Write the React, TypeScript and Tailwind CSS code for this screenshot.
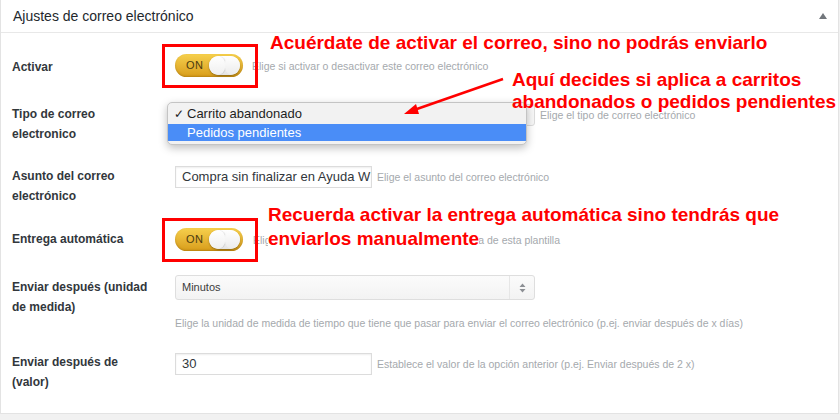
import React from 'react';

const sans = { fontFamily: '"Liberation Sans", Arial, sans-serif' };

function OnToggle() {
  return (
    <div className="relative w-[68px] h-[23px] rounded-full bg-linear-to-b from-[#f6d04c] to-[#d89d18] shadow-[inset_0_-1px_2px_rgba(120,80,0,0.35)] flex items-center shrink-0">
      <span className="ml-[11px] text-[11px] leading-none text-[#4b3b10] tracking-[0.5px]">ON</span>
      <span className="absolute right-[3px] top-[2px] w-[31px] h-[19px] rounded-full bg-linear-to-b from-white to-[#e4e4e4] shadow-[0_1px_2px_rgba(0,0,0,0.35)] flex overflow-hidden">
        <span className="w-1/2 h-full rounded-full bg-linear-to-b from-white to-[#efefef] shadow-[1px_0_1px_rgba(0,0,0,0.12)]" />
        <span className="w-1/2 h-full rounded-full bg-linear-to-b from-white to-[#ebebeb]" />
      </span>
    </div>
  );
}

function RedBox({ children }: { children: React.ReactNode }) {
  return (
    <div className="relative">
      {children}
      <div className="absolute left-[-13px] top-[-10px] w-[96px] h-[44px] border-[3px] border-[#ff0000]" />
    </div>
  );
}

function Label({ children, pt }: { children: React.ReactNode; pt: string }) {
  return (
    <div className={`w-[163px] shrink-0 text-[12px] leading-[20px] font-bold text-[#32373c] ${pt}`}>
      {children}
    </div>
  );
}

function Desc({ children, className = '' }: { children: React.ReactNode; className?: string }) {
  return <span className={`text-[10.5px] leading-[14px] text-[#a5a9ad] whitespace-nowrap ${className}`}>{children}</span>;
}

function TextInput({ value }: { value: string }) {
  return (
    <div className="w-[197px] h-[22px] border border-[#dcdcdc] shadow-[inset_0_1px_2px_rgba(0,0,0,0.07)] bg-white flex items-center px-[6px] overflow-hidden shrink-0">
      <span className="text-[13px] text-[#32373c] whitespace-nowrap">{value}</span>
    </div>
  );
}

export default function App() {
  return (
    <div className="relative w-[840px] h-[420px] bg-[#f1f1f1] overflow-hidden" style={sans}>
      <div className="w-[839px] h-[414px] bg-white border-l border-r border-b border-[#e3e3e3]">
        {/* panel header */}
        <div className="h-[33px] border-b border-[#e8e8e8] flex items-center justify-between pl-[12px] pr-[11px]">
          <span className="text-[14px] text-[#23282d]">Ajustes de correo electrónico</span>
          <svg width="8" height="6" viewBox="0 0 8 6">
            <path d="M0 6 L4 0 L8 6 Z" fill="#72777c" />
          </svg>
        </div>

        {/* Activar */}
        <div className="h-[59px] flex pl-[11px]">
          <Label pt="pt-[24px]">Activar</Label>
          <div className="pt-[21px] flex items-center h-[44px] gap-[9px]">
            <RedBox>
              <OnToggle />
            </RedBox>
            <Desc>Elige si activar o desactivar este correo electrónico</Desc>
          </div>
        </div>

        {/* Tipo de correo */}
        <div className="h-[60px] flex pl-[11px]">
          <Label pt="pt-[12px]">
            Tipo de correo
            <br />
            electronico
          </Label>
          <div className="pt-[12px] flex items-center h-[34px] gap-[5px]">
            <div className="w-[360px] h-[22px] border border-[#dcdcdc] rounded-[3px] bg-[#f7f7f7]" />
            <Desc>Elige el tipo de correo electrónico</Desc>
          </div>
        </div>

        {/* Asunto */}
        <div className="h-[60px] flex pl-[11px]">
          <Label pt="pt-[14px]">
            Asunto del correo
            <br />
            electrónico
          </Label>
          <div className="pt-[14px] flex items-center h-[36px] gap-[5px]">
            <TextInput value="Compra sin finalizar en Ayuda W" />
            <Desc>Elige el asunto del correo electrónico</Desc>
          </div>
        </div>

        {/* Entrega automática */}
        <div className="h-[54px] flex pl-[11px]">
          <Label pt="pt-[17px]">Entrega automática</Label>
          <div className="pt-[16px] flex items-center h-[39px] gap-[10px]">
            <RedBox>
              <OnToggle />
            </RedBox>
            <Desc>Elige si activar o desactivar la entrega automática de esta plantilla</Desc>
          </div>
        </div>

        {/* Enviar después (unidad) */}
        <div className="h-[74px] flex pl-[11px]">
          <Label pt="pt-[11px]">
            Enviar después (unidad
            <br />
            de medida)
          </Label>
          <div className="pt-[9px] flex flex-col">
            <div className="w-[360px] h-[25px] border border-[#dedede] rounded-[3px] bg-linear-to-b from-[#fbfbfb] to-[#f3f3f3] flex items-center">
              <span className="flex-1 pl-[6px] text-[11px] text-[#3c3c3c]">Minutos</span>
              <span className="w-[25px] h-full border-l border-[#e6e6e6] flex items-center justify-center">
                <svg width="7" height="10" viewBox="0 0 7 10">
                  <path d="M0.5 4 L3.5 0.5 L6.5 4 Z M0.5 6 L3.5 9.5 L6.5 6 Z" fill="#8c8f94" />
                </svg>
              </span>
            </div>
            <Desc className="mt-[16px]">
              Elige la unidad de medida de tiempo que tiene que pasar para enviar el correo electrónico (p.ej. enviar después de x días)
            </Desc>
          </div>
        </div>

        {/* Enviar después (valor) */}
        <div className="flex pl-[11px]">
          <Label pt="pt-[12px]">
            Enviar después de
            <br />
            (valor)
          </Label>
          <div className="pt-[13px] flex items-center h-[35px] gap-[5px]">
            <TextInput value="30" />
            <Desc>Establece el valor de la opción anterior (p.ej. Enviar después de 2 x)</Desc>
          </div>
        </div>
      </div>

      {/* open options list of the tipo select */}
      <div className="absolute left-[167px] top-[102px] w-[360px] h-[43px] rounded-[5px] border border-[#c4c4c4] bg-[#f2f2f2] shadow-[0_3px_8px_rgba(0,0,0,0.25)] pt-[1px] overflow-hidden">
        <div className="h-[20px] flex items-center text-[13px] text-[#1e1e1e]">
          <span className="w-[19px] pl-[6px] text-[12px]">✓</span>
          <span>Carrito abandonado</span>
        </div>
        <div className="h-[17px] flex items-center bg-[#4a8df7] text-[13px] text-white">
          <span className="w-[19px]" />
          <span>Pedidos pendientes</span>
        </div>
      </div>

      {/* notes */}
      <div className="absolute left-[270px] top-[32px] text-[19px] leading-[22px] font-bold text-[#ff0000] whitespace-nowrap">
        Acuérdate de activar el correo, sino no podrás enviarlo
      </div>
      <div className="absolute left-[512px] top-[69px] text-[19px] leading-[22px] font-bold text-[#ff0000] whitespace-nowrap">
        Aquí decides si aplica a carritos
        <br />
        abandonados o pedidos pendientes
      </div>
      <div className="absolute left-[268px] top-[203px] text-[19px] leading-[24px] font-bold text-[#ff0000] whitespace-nowrap">
        Recuerda activar la entrega automática sino tendrás que
        <br />
        <span className="bg-white">enviarlos manualmente</span>
      </div>

      <svg className="absolute left-0 top-0 pointer-events-none" width="840" height="420">
        <line x1="503" y1="79" x2="414" y2="110" stroke="#ff0000" strokeWidth="2.5" />
        <path d="M404 114 L416 104 L419 114 Z" fill="#ff0000" />
      </svg>
    </div>
  );
}
